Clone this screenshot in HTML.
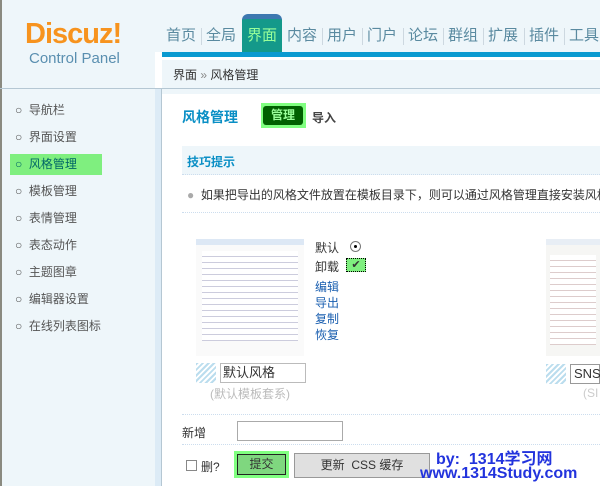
<!DOCTYPE html><html><head><meta charset="utf-8"><style>
*{margin:0;padding:0;box-sizing:border-box}
body{width:600px;height:486px;overflow:hidden;background:#fff;font-family:"Liberation Sans","Noto Sans CJK SC",sans-serif;font-size:12px;color:#333;position:relative}
.a{position:absolute}
.n{position:absolute;top:26px;font-size:15px;color:#5a8aa0;line-height:20px}
.s{position:absolute;top:28px;width:1px;height:17px;background:#cdd8e0}
</style></head><body>
<div class="a" style="left:0;top:0;width:600px;height:89px;background:#eef6fa"></div>
<div class="a" style="left:0;top:0;width:2px;height:486px;background:#8a8a80"></div>
<div class="a" style="left:25px;top:18px;font-size:29px;font-weight:bold;color:#f7931e;letter-spacing:-1px">Discuz!</div>
<div class="a" style="left:29px;top:50px;font-size:15px;color:#5a8fb0">Control Panel</div>
<div class="a" style="left:242px;top:14px;width:40px;height:38px;background:#14998a;border-top:5px solid #3d78b0;border-radius:6px 6px 0 0"></div>
<div class="n" style="left:166px">首页</div><div class="s" style="left:201px"></div>
<div class="n" style="left:206px">全局</div>
<div class="n" style="left:247px;color:#9f9">界面</div>
<div class="n" style="left:287px">内容</div><div class="s" style="left:322px"></div>
<div class="n" style="left:327px">用户</div><div class="s" style="left:362px"></div>
<div class="n" style="left:367px">门户</div><div class="s" style="left:403px"></div>
<div class="n" style="left:408px">论坛</div><div class="s" style="left:443px"></div>
<div class="n" style="left:448px">群组</div><div class="s" style="left:483px"></div>
<div class="n" style="left:488px">扩展</div><div class="s" style="left:524px"></div>
<div class="n" style="left:529px">插件</div><div class="s" style="left:564px"></div>
<div class="n" style="left:569px">工具</div>
<div class="a" style="left:162px;top:52px;width:438px;height:5px;background:#0b9ad0"></div>
<div class="a" style="left:155px;top:52px;width:7px;height:37px;background:#fff"></div>
<div class="a" style="left:162px;top:57px;width:438px;height:3px;background:#fff"></div>
<div class="a" style="left:173px;top:66px;font-size:12px;color:#333">界面 <span style="color:#888">»</span> 风格管理</div>
<div class="a" style="left:0;top:88px;width:600px;height:1px;background:#b5c7d3"></div>
<div class="a" style="left:2px;top:89px;width:153px;height:397px;background:#eef6fa"></div>
<div class="a" style="left:155px;top:89px;width:6px;height:397px;background:#dcebf6"></div>
<div class="a" style="left:161px;top:89px;width:1px;height:397px;background:#b5c7d3"></div>
<div class="a" style="left:10px;top:154px;width:92px;height:21px;background:#7fef7f"></div>
<div class="a" style="left:15px;top:97px;line-height:27px;font-size:12px;color:#555">
<div>○ &nbsp;导航栏</div><div>○ &nbsp;界面设置</div><div style="color:#066">○ &nbsp;风格管理</div><div>○ &nbsp;模板管理</div><div>○ &nbsp;表情管理</div><div>○ &nbsp;表态动作</div><div>○ &nbsp;主题图章</div><div>○ &nbsp;编辑器设置</div><div>○ &nbsp;在线列表图标</div></div>
<div class="a" style="left:162px;top:89px;width:438px;height:5px;background:#eef6fa"></div>
<div class="a" style="left:182px;top:107px;font-size:14px;font-weight:bold;color:#0a8fc5">风格管理</div>
<div class="a" style="left:261px;top:103px;width:45px;height:25px;background:#80ff80"></div>
<div class="a" style="left:263px;top:106px;width:40px;height:19px;background:#006000;border-radius:3px;color:#9f9;font-weight:bold;text-align:center;line-height:19px">管理</div>
<div class="a" style="left:312px;top:109px;color:#444;font-weight:bold">导入</div>
<div class="a" style="left:182px;top:146px;width:418px;height:29px;background:#eef6fa;border-bottom:1px dotted #cde"></div>
<div class="a" style="left:187px;top:153px;font-weight:bold;color:#0a8fc5">技巧提示</div>
<div class="a" style="left:187px;top:186px;color:#333;white-space:nowrap"><span style="color:#aaa">●</span>&nbsp; 如果把导出的风格文件放置在模板目录下，则可以通过风格管理直接安装风格</div>
<div class="a" style="left:182px;top:212px;width:418px;border-top:1px dotted #cde"></div>
<div class="a" style="left:196px;top:239px;width:108px;height:117px;background:#fafafa;border-top:6px solid #dde8f5"><div style="margin:6px;height:90px;background:repeating-linear-gradient(#fff 0 5px,#ccd 5px 6px)"></div></div>
<div class="a" style="left:546px;top:239px;width:54px;height:117px;background:#f6f6f4;border-top:6px solid #e8eef5"><div style="margin:10px 4px;height:90px;background:repeating-linear-gradient(#fff 0 5px,#dcc 5px 6px)"></div></div>
<div class="a" style="left:315px;top:239px;line-height:19px;color:#333">默认<br>卸载</div>
<div class="a" style="left:350px;top:241px;width:11px;height:11px;border:1px solid #777;border-radius:50%;background:#fff"><div style="margin:3px;width:3px;height:3px;background:#000;border-radius:50%"></div></div>
<div class="a" style="left:346px;top:258px;width:20px;height:14px;background:#7fef7f;border:1px dotted #000;font-size:11px;line-height:12px;text-align:center">✔</div>
<div class="a" style="left:315px;top:279px;line-height:16px;color:#1a5fb0">编辑<br>导出<br>复制<br>恢复</div>
<div class="a" style="left:196px;top:363px;width:20px;height:20px;background:repeating-linear-gradient(135deg,#bde 0 2px,#fff 2px 4px)"></div>
<div class="a" style="left:220px;top:363px;width:86px;height:20px;border:1px solid #bbb;padding-left:2px;font-size:13px;line-height:18px">默认风格</div>
<div class="a" style="left:210px;top:385px;color:#bbb">(默认模板套系)</div>
<div class="a" style="left:546px;top:364px;width:20px;height:20px;background:repeating-linear-gradient(135deg,#bde 0 2px,#fff 2px 4px)"></div>
<div class="a" style="left:570px;top:364px;width:30px;height:20px;border:1px solid #999;font-size:13px;line-height:18px;padding-left:3px">SNS</div>
<div class="a" style="left:583px;top:386px;color:#ccc">(SI</div>
<div class="a" style="left:182px;top:414px;width:418px;border-top:1px dotted #cde"></div>
<div class="a" style="left:182px;top:424px">新增</div>
<div class="a" style="left:237px;top:421px;width:106px;height:20px;border:1px solid #aaa"></div>
<div class="a" style="left:182px;top:444px;width:418px;border-top:1px dotted #cde"></div>
<div class="a" style="left:186px;top:460px;width:11px;height:11px;border:1px solid #888"></div>
<div class="a" style="left:201px;top:458px;color:#333">删?</div>
<div class="a" style="left:234px;top:451px;width:55px;height:27px;background:#80ff80"></div>
<div class="a" style="left:237px;top:454px;width:49px;height:21px;background:#7fd77f;border:1px solid #222;text-align:center;line-height:19px">提交</div>
<div class="a" style="left:294px;top:453px;width:136px;height:25px;background:#e0e0e0;border:1px solid #999;text-align:center;line-height:23px">更新 &nbsp;CSS 缓存</div>
<div class="a" style="left:436px;top:445px;font-size:16px;font-weight:bold;color:#2233dd;white-space:nowrap">by: &nbsp;1314学习网</div>
<div class="a" style="left:420px;top:465px;font-size:16px;font-weight:bold;color:#2233dd;white-space:nowrap">www.1314Study.com</div>
</body></html>
